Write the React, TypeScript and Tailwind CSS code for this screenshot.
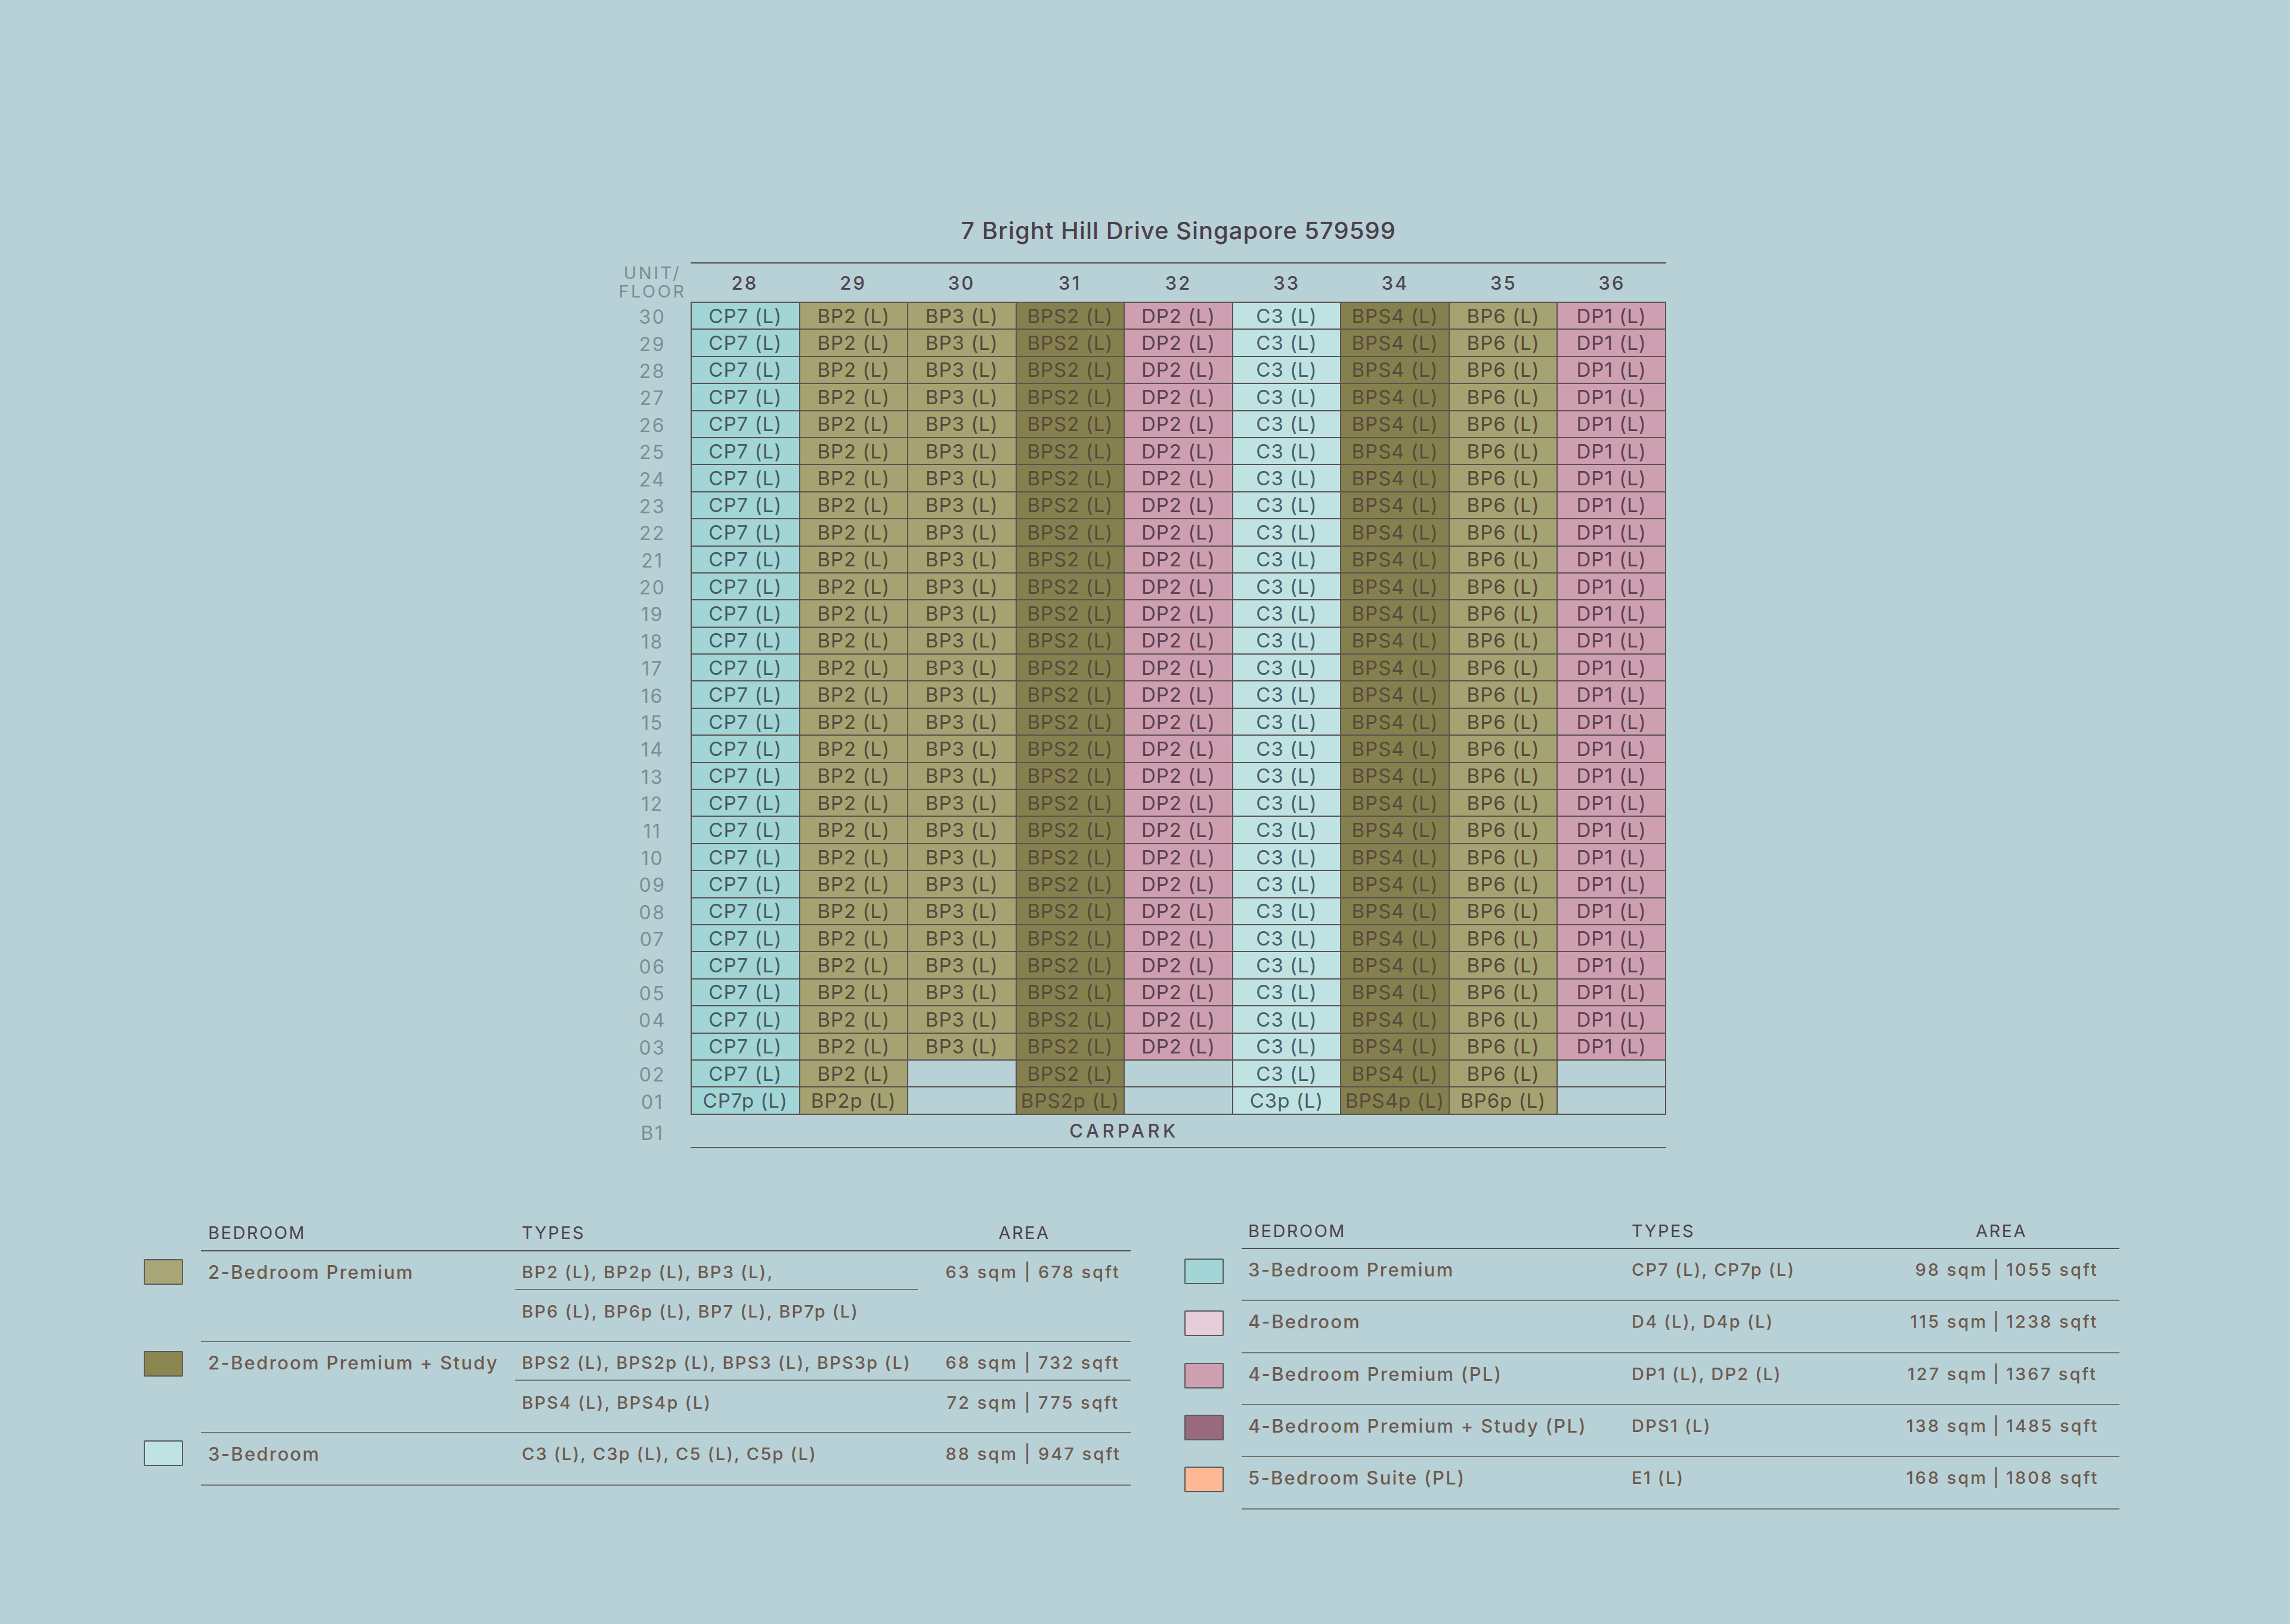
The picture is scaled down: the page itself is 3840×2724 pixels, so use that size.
const COLS = ["28","29","30","31","32","33","34","35","36"];
const FLOORS = ["30","29","28","27","26","25","24","23","22","21","20","19","18","17","16","15","14","13","12","11","10","09","08","07","06","05","04","03","02","01"];

const STYLE: Record<string,string> = {
  cp: "bg-[#a1d5d6] text-[#475962]",
  bp: "bg-[#a6a372] text-[#55463c]",
  bs: "bg-[#85814f] text-[#59483b]",
  dp: "bg-[#cd9fb0] text-[#5a404f]",
  c3: "bg-[#bfe3e3] text-[#4b5b64]",
  no: "",
};
const KINDS = ["cp","bp","bp","bs","dp","c3","bs","bp","dp"];
const NAMES = ["CP7","BP2","BP3","BPS2","DP2","C3","BPS4","BP6","DP1"];

function cellsFor(floor: string) {
  return NAMES.map((n, i) => {
    const empty = (floor === "02" || floor === "01") && (i === 2 || i === 4 || i === 8);
    if (empty) return { label: "", kind: "no" };
    const name = floor === "01" ? n + "p" : n;
    return { label: name + " (L)", kind: KINDS[i] };
  });
}

function Chart() {
  return (
    <div className="flex flex-col ml-[1030px] w-[1764px]">
      <div className="ml-[128px] h-[76px] text-center text-[40px] leading-[46px] font-medium tracking-[1px] text-[#4a3f4b]">
        7 Bright Hill Drive Singapore 579599
      </div>
      <div className="flex h-[66px]">
        <div className="w-[128px] pt-[2px] text-center text-[29px] leading-[31px] tracking-[3.5px] text-[#7d8c95]">
          <div>UNIT/</div>
          <div>FLOOR</div>
        </div>
        <div className="flex-1 grid grid-cols-9 pt-[3px] border-t-2 border-[#4f5054] items-center text-center text-[31px] font-medium tracking-[3px] text-[#4e4650]">
          {COLS.map((c) => (
            <div key={c}>{c}</div>
          ))}
        </div>
      </div>
      <div className="flex">
        <div className="w-[128px] flex flex-col">
          {FLOORS.map((f) => (
            <div key={f} className="h-[45.4px] pt-[7px] flex items-center justify-center text-[32px] leading-none tracking-[2.5px] text-[#7d8c95]">
              {f}
            </div>
          ))}
        </div>
        <div className="flex-1 border-t-2 border-l-2 border-[#5d5250] flex flex-col">
          {FLOORS.map((f) => (
            <div key={f} className="grid grid-cols-9 h-[45.4px]">
              {cellsFor(f).map((c, i) => (
                <div
                  key={i}
                  className={`flex items-center justify-center pt-[1px] border-r-2 border-b-2 border-[#5d5250] text-[33px] leading-none tracking-[1px] whitespace-nowrap ${STYLE[c.kind]}`}
                >
                  {c.label}
                </div>
              ))}
            </div>
          ))}
        </div>
      </div>
      <div className="flex h-[56px]">
        <div className="w-[128px] pt-[7px] flex items-center justify-center text-[32px] leading-none tracking-[2.5px] text-[#7d8c95]">B1</div>
        <div className="flex-1 grid grid-cols-9 border-b-2 border-[#5f5a62] items-center text-center">
          <div className="col-span-8 pt-[1px] text-[31px] font-medium tracking-[5.5px] text-[#524852]">CARPARK</div>
        </div>
      </div>
    </div>
  );
}

function Swatch({ color, top }: { color: string; top: string }) {
  return (
    <div className={`w-[96px] shrink-0 ${top}`}>
      <div className={`w-[66px] h-[43px] border-2 border-[#5a5c5e] rounded-[2px] ${color}`} />
    </div>
  );
}

function Area({ sqm, sqft, w, pipe }: { sqm: string; sqft: string; w: string; pipe: string }) {
  return (
    <div className="flex leading-[40px] tracking-[3px] whitespace-nowrap">
      <span className={`text-right ${w}`}>{sqm}</span>
      <span className={`text-center ${pipe}`}>|</span>
      <span>{sqft}</span>
    </div>
  );
}

function LeftArea({ sqm, sqft }: { sqm: string; sqft: string }) {
  return <Area sqm={sqm} sqft={sqft} w="w-[168px]" pipe="w-[34px]" />;
}

const NAME = "text-[31px] tracking-[2.25px] leading-[40px] whitespace-nowrap";
const TYPE = "tracking-[2.2px] leading-[40px] whitespace-nowrap";

function LeftLegend() {
  const line = "border-[#74766f]";
  return (
    <div className="w-[1655px] mt-[4px] text-[#6d5a4e] text-[29px] font-medium">
      <div className="flex">
        <div className="w-[96px] shrink-0" />
        <div className="flex-1 flex h-[60px] border-b-2 border-[#50505a] items-center text-[#4b414b] text-[29px] font-normal tracking-[2.5px]">
          <div className="w-[527px] pl-[12px]">BEDROOM</div>
          <div className="w-[675px] pl-[11px]">TYPES</div>
          <div className="w-[357px] text-center">AREA</div>
        </div>
      </div>

      <div className="flex h-[152px]">
        <Swatch color="bg-[#a8a576]" top="pt-[13px]" />
        <div className={`flex-1 flex border-b-2 ${line}`}>
          <div className={`w-[527px] pl-[12px] pt-[15px] ${NAME}`}>2-Bedroom Premium</div>
          <div className="w-[675px]">
            <div className={`h-[65px] pl-[11px] pt-[15px] border-b-2 ${line} ${TYPE}`}>BP2 (L), BP2p (L), BP3 (L),</div>
            <div className={`pl-[11px] pt-[16px] ${TYPE}`}>BP6 (L), BP6p (L), BP7 (L), BP7p (L)</div>
          </div>
          <div className="w-[357px] pt-[15px]">
            <LeftArea sqm="63 sqm" sqft="678 sqft" />
          </div>
        </div>
      </div>

      <div className="flex h-[153px]">
        <Swatch color="bg-[#8b8650]" top="pt-[15px]" />
        <div className={`flex-1 flex border-b-2 ${line}`}>
          <div className={`w-[527px] pl-[12px] pt-[15px] ${NAME}`}>2-Bedroom Premium + Study</div>
          <div className="w-[1032px]">
            <div className={`h-[65px] flex pt-[15px] border-b-2 ${line}`}>
              <div className={`w-[675px] pl-[11px] ${TYPE}`}>BPS2 (L), BPS2p (L), BPS3 (L), BPS3p (L)</div>
              <LeftArea sqm="68 sqm" sqft="732 sqft" />
            </div>
            <div className="flex pt-[17px]">
              <div className={`w-[675px] pl-[11px] ${TYPE}`}>BPS4 (L), BPS4p (L)</div>
              <LeftArea sqm="72 sqm" sqft="775 sqft" />
            </div>
          </div>
        </div>
      </div>

      <div className="flex h-[88px]">
        <Swatch color="bg-[#bfe3e3]" top="pt-[12px]" />
        <div className={`flex-1 flex pt-[15px] border-b-2 ${line}`}>
          <div className={`w-[527px] pl-[12px] ${NAME}`}>3-Bedroom</div>
          <div className={`w-[675px] pl-[11px] ${TYPE}`}>C3 (L), C3p (L), C5 (L), C5p (L)</div>
          <LeftArea sqm="88 sqm" sqft="947 sqft" />
        </div>
      </div>
    </div>
  );
}

const RIGHT = [
  { color: "bg-[#a2d6d6]", name: "3-Bedroom Premium", types: "CP7 (L), CP7p (L)", sqm: "98 sqm", sqft: "1055 sqft" },
  { color: "bg-[#e6cdd9]", name: "4-Bedroom", types: "D4 (L), D4p (L)", sqm: "115 sqm", sqft: "1238 sqft" },
  { color: "bg-[#cd9fb0]", name: "4-Bedroom Premium (PL)", types: "DP1 (L), DP2 (L)", sqm: "127 sqm", sqft: "1367 sqft" },
  { color: "bg-[#996a7b]", name: "4-Bedroom Premium + Study (PL)", types: "DPS1 (L)", sqm: "138 sqm", sqft: "1485 sqft" },
  { color: "bg-[#fdb995]", name: "5-Bedroom Suite (PL)", types: "E1 (L)", sqm: "168 sqm", sqft: "1808 sqft" },
];

function RightLegend() {
  return (
    <div className="w-[1568px] text-[#6d5a4e] text-[29px] font-medium">
      <div className="flex">
        <div className="w-[96px] shrink-0" />
        <div className="flex-1 flex h-[60px] pt-[3px] border-b-2 border-[#50505a] items-center text-[#4b414b] text-[29px] font-normal tracking-[2.5px]">
          <div className="w-[643px] pl-[11px]">BEDROOM</div>
          <div className="w-[433px] pl-[11px]">TYPES</div>
          <div className="w-[396px] text-center">AREA</div>
        </div>
      </div>
      {RIGHT.map((r) => (
        <div key={r.name} className="flex h-[87.4px]">
          <Swatch color={r.color} top="pt-[16px]" />
          <div className="flex-1 flex pt-[15px] border-b-2 border-[#74766f]">
            <div className={`w-[643px] pl-[11px] ${NAME}`}>{r.name}</div>
            <div className={`w-[433px] pl-[11px] ${TYPE}`}>{r.types}</div>
            <Area sqm={r.sqm} sqft={r.sqft} w="w-[175px]" pipe="w-[31px]" />
          </div>
        </div>
      ))}
    </div>
  );
}

export default function App() {
  return (
    <div className="w-[3840px] h-[2724px] bg-[#b8d1d6] pt-[364px] font-['Inter',sans-serif]">
      <Chart />
      <div className="flex items-start gap-[90px] ml-[241px] mt-[109px]">
        <LeftLegend />
        <RightLegend />
      </div>
    </div>
  );
}
